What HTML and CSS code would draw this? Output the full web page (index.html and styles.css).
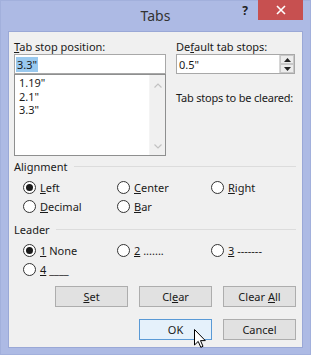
FILE: index.html
```html
<!DOCTYPE html>
<html lang="en">
<head>
    <meta charset="UTF-8">
    <title>Tabs</title>
    <link rel="stylesheet" href="styles.css">
</head>
<body>
    <div class="window">
        <div class="titlebar">
            <span></span>
            <span class="title">Tabs</span>
            <div class="caption-buttons">
                <span class="help">?</span>
                <span class="close">
                    <svg viewBox="0 0 10 10" width="10" height="10">
                        <path d="M1 1L9 9M9 1L1 9"></path>
                    </svg>
                </span>
            </div>
        </div>

        <div class="client">
            <div class="top-row">
                <div class="col-left">
                    <div class="label"><u>T</u>ab stop position:</div>
                    <div class="textbox"><span class="selection">3.3"</span></div>
                    <div class="listbox">
                        <ul class="items">
                            <li>1.19"</li>
                            <li>2.1"</li>
                            <li>3.3"</li>
                        </ul>
                        <div class="scrollbar">
                            <svg viewBox="0 0 8 5" width="8" height="5"><path d="M0.5 4.5L4 1L7.5 4.5"></path></svg>
                            <svg viewBox="0 0 8 5" width="8" height="5"><path d="M0.5 0.5L4 4L7.5 0.5"></path></svg>
                        </div>
                    </div>
                </div>
                <div class="col-right">
                    <div class="label">De<u>f</u>ault tab stops:</div>
                    <div class="textbox spin">
                        <span class="value">0.5"</span>
                        <div class="spinner">
                            <span class="spin-btn"><svg viewBox="0 0 7 4" width="7" height="4"><path d="M0 4L3.5 0L7 4Z"></path></svg></span>
                            <span class="spin-btn"><svg viewBox="0 0 7 4" width="7" height="4"><path d="M0 0L3.5 4L7 0Z"></path></svg></span>
                        </div>
                    </div>
                    <div class="label cleared">Tab stops to be cleared:</div>
                </div>
            </div>

            <div class="group-title">Alignment</div>
            <div class="radio-grid">
                <div class="radio checked"><span class="dot"></span><span><u>L</u>eft</span></div>
                <div class="radio"><span class="dot"></span><span><u>C</u>enter</span></div>
                <div class="radio"><span class="dot"></span><span><u>R</u>ight</span></div>
                <div class="radio"><span class="dot"></span><span><u>D</u>ecimal</span></div>
                <div class="radio"><span class="dot"></span><span><u>B</u>ar</span></div>
            </div>

            <div class="group-title leader">Leader</div>
            <div class="radio-grid">
                <div class="radio checked"><span class="dot"></span><span><u>1</u> None</span></div>
                <div class="radio"><span class="dot"></span><span><u>2</u> .......</span></div>
                <div class="radio"><span class="dot"></span><span><u>3</u> -------</span></div>
                <div class="radio"><span class="dot"></span><span><u>4</u> ____</span></div>
            </div>

            <div class="button-row first">
                <button class="btn"><u>S</u>et</button>
                <button class="btn">Cl<u>e</u>ar</button>
                <button class="btn">Clear <u>A</u>ll</button>
            </div>
            <div class="button-row">
                <button class="btn default">OK</button>
                <button class="btn">Cancel</button>
            </div>
        </div>

        <svg class="cursor" viewBox="0 0 12 19" width="12" height="19">
            <path d="M0.5 0.5L0.5 16L4.2 12.4L6.8 18.3L9 17.3L6.5 11.6L11.3 11.6Z"></path>
        </svg>
    </div>
</body>
</html>
```

FILE: styles.css
```css
* {
    margin: 0;
    padding: 0;
    box-sizing: border-box;
}

body {
    background: #ffffff;
    font-family: "Noto Sans", "Open Sans", sans-serif;
    font-size: 11px;
    color: #1a1a1a;
}

.window {
    position: relative;
    width: 311px;
    height: 355px;
    background: #adbae4;
    border: 1px solid #a2b0dc;
    display: flex;
    flex-direction: column;
}

/* Title bar */
.titlebar {
    height: 30px;
    display: grid;
    grid-template-columns: 1fr auto 1fr;
    align-items: start;
}

.title {
    font-size: 14px;
    color: #333;
    line-height: 30px;
}

.caption-buttons {
    display: flex;
    justify-content: flex-end;
    align-items: flex-start;
    padding-right: 7px;
}

.help {
    font-weight: bold;
    font-size: 12px;
    color: #222;
    line-height: 16px;
    margin: 2px 10px 0 0;
}

.close {
    width: 45px;
    height: 20px;
    margin-top: -1px;
    background: #c75050;
    display: flex;
    align-items: center;
    justify-content: center;
}

.close svg {
    stroke: white;
    stroke-width: 1.6;
}

/* Client area */
.client {
    flex: 1;
    margin: 0 7px 6px 7px;
    background: #f0f0f0;
    border: 1px solid #9aa8d6;
    padding: 7px 6px 0 5px;
}

.top-row {
    display: flex;
    gap: 10px;
}

.col-left {
    width: 152px;
}

.col-right {
    width: 119px;
}

.label {
    line-height: 15px;
    white-space: nowrap;
}

.textbox {
    height: 20px;
    background: white;
    border: 1px solid #a8a8a8;
    padding: 1px 1px;
    display: flex;
    align-items: center;
    line-height: 15px;
}

.selection {
    background: #99c9ef;
    padding: 0 1px;
    line-height: 15px;
}

.listbox {
    height: 82px;
    background: white;
    border: 1px solid #8e8f8f;
    display: flex;
}

.items {
    flex: 1;
    list-style: none;
    padding: 1px 4px;
}

.items li {
    line-height: 13.5px;
}

.scrollbar {
    width: 16px;
    background: #f0f0f0;
    border-left: 1px solid #f4f4f4;
    display: flex;
    flex-direction: column;
    justify-content: space-between;
    align-items: center;
    padding: 8px 0 6px;
}

.scrollbar path {
    fill: none;
    stroke: #c2c2c2;
    stroke-width: 1.2;
}

.spin {
    padding-right: 0;
    justify-content: space-between;
}

.value {
    padding-left: 1px;
}

.spinner {
    width: 15px;
    height: 18px;
    display: flex;
    flex-direction: column;
    border-left: 1px solid #d6d6d6;
}

.spin-btn {
    flex: 1;
    background: #ececec;
    border: 1px solid #c8c8c8;
    display: flex;
    align-items: center;
    justify-content: center;
}

.spin-btn path {
    fill: #222;
}

.cleared {
    margin-top: 16px;
    letter-spacing: -0.2px;
}

/* Groups */
.group-title {
    display: flex;
    align-items: center;
    gap: 6px;
    line-height: 15px;
    margin-top: 3px;
}

.group-title::after {
    content: "";
    flex: 1;
    height: 1px;
    background: #dcdcdc;
}

.group-title.leader {
    margin-top: 6px;
}

.radio-grid {
    display: grid;
    grid-template-columns: 94px 94px 94px;
    padding-left: 9px;
    margin-top: 4px;
}

.radio {
    display: flex;
    align-items: center;
    gap: 4px;
    height: 19px;
}

.radio .dot {
    width: 13px;
    height: 13px;
    border-radius: 50%;
    border: 1px solid #333;
    background: white;
    display: flex;
    align-items: center;
    justify-content: center;
}

.radio.checked .dot::after {
    content: "";
    width: 7px;
    height: 7px;
    border-radius: 50%;
    background: #1a1a1a;
}

/* Buttons */
.button-row {
    display: flex;
    justify-content: flex-end;
    gap: 11px;
    margin-top: 12px;
}

.button-row.first {
    margin-top: 7px;
}

.btn {
    width: 73px;
    height: 21px;
    font-family: inherit;
    font-size: 11px;
    color: #1a1a1a;
    background: #e1e1e1;
    border: 1px solid #adadad;
}

.btn.default {
    background: #e5f1fb;
    border-color: #5a9ad6;
}

.cursor {
    position: absolute;
    left: 193px;
    top: 328px;
}

.cursor path {
    fill: white;
    stroke: black;
    stroke-width: 1;
    stroke-linejoin: miter;
}
```
